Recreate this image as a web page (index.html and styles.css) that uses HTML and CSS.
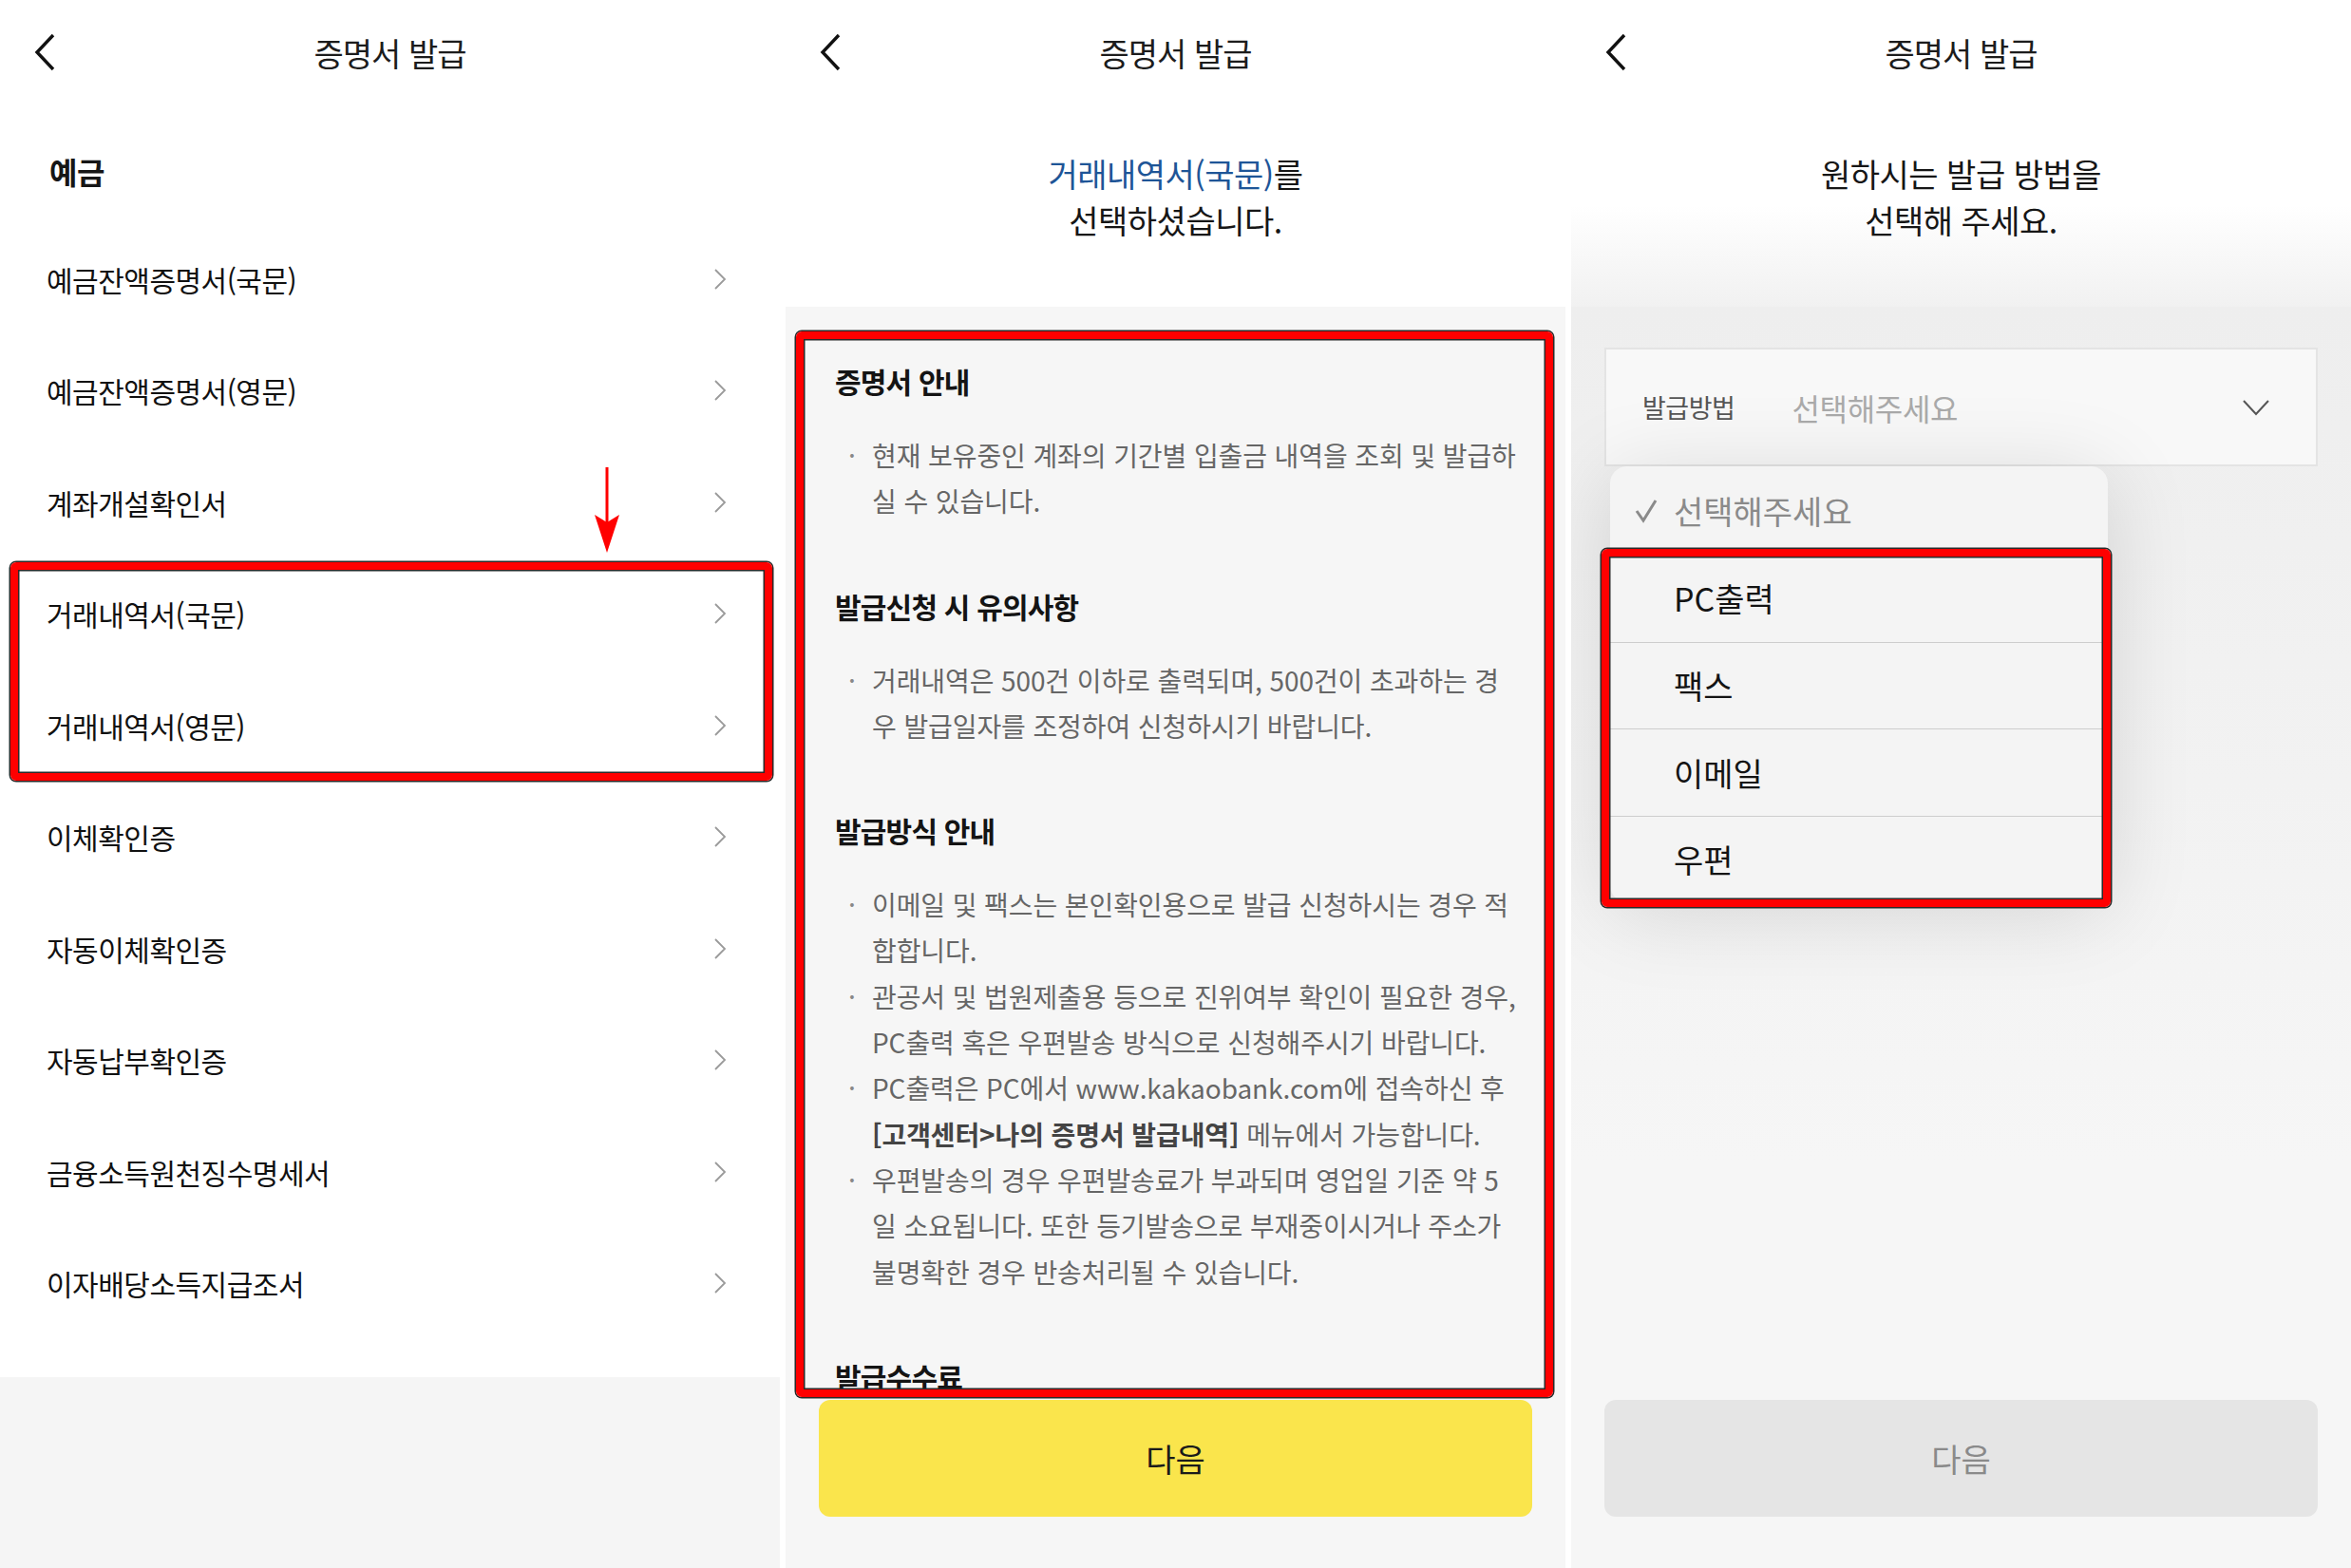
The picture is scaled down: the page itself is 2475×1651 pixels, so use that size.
FILE: index.html
```html
<!DOCTYPE html>
<html lang="ko">
<head>
  <meta charset="UTF-8">
  <title>증명서 발급</title>
  <link rel="stylesheet" href="styles.css">
</head>
<body>

<div class="screens">

  <!-- 1. 증명서 목록 -->
  <section class="screen">
    <header class="topbar">
      <svg class="back" width="24" height="40" viewBox="0 0 24 40"><path d="M21 2 L4 20 L21 38" /></svg>
      <h1>증명서 발급</h1>
    </header>

    <div class="group-title">예금</div>
    <ul class="doc-list">
      <li>예금잔액증명서(국문)<svg class="go" width="14" height="24" viewBox="0 0 14 24"><path d="M2 2 L12 12 L2 22" /></svg></li>
      <li>예금잔액증명서(영문)<svg class="go" width="14" height="24" viewBox="0 0 14 24"><path d="M2 2 L12 12 L2 22" /></svg></li>
      <li>계좌개설확인서<svg class="go" width="14" height="24" viewBox="0 0 14 24"><path d="M2 2 L12 12 L2 22" /></svg></li>
      <li>거래내역서(국문)<svg class="go" width="14" height="24" viewBox="0 0 14 24"><path d="M2 2 L12 12 L2 22" /></svg></li>
      <li>거래내역서(영문)<svg class="go" width="14" height="24" viewBox="0 0 14 24"><path d="M2 2 L12 12 L2 22" /></svg></li>
      <li>이체확인증<svg class="go" width="14" height="24" viewBox="0 0 14 24"><path d="M2 2 L12 12 L2 22" /></svg></li>
      <li>자동이체확인증<svg class="go" width="14" height="24" viewBox="0 0 14 24"><path d="M2 2 L12 12 L2 22" /></svg></li>
      <li>자동납부확인증<svg class="go" width="14" height="24" viewBox="0 0 14 24"><path d="M2 2 L12 12 L2 22" /></svg></li>
      <li>금융소득원천징수명세서<svg class="go" width="14" height="24" viewBox="0 0 14 24"><path d="M2 2 L12 12 L2 22" /></svg></li>
      <li>이자배당소득지급조서<svg class="go" width="14" height="24" viewBox="0 0 14 24"><path d="M2 2 L12 12 L2 22" /></svg></li>
    </ul>
    <div class="list-foot"></div>

    <div class="mark mark-list"></div>
    <svg class="pointer" width="28" height="90" viewBox="0 0 28 90">
      <rect x="12.5" y="0" width="3" height="60" />
      <path d="M1 50 L14 58 L27 50 L14 90 Z" />
    </svg>
  </section>

  <!-- 2. 증명서 안내 -->
  <section class="screen">
    <header class="topbar">
      <svg class="back" width="24" height="40" viewBox="0 0 24 40"><path d="M21 2 L4 20 L21 38" /></svg>
      <h1>증명서 발급</h1>
    </header>

    <p class="lead"><span class="picked">거래내역서(국문)</span>를<br>선택하셨습니다.</p>

    <div class="sheet">
      <div class="guide">
        <h2>증명서 안내</h2>
        <ul class="notes">
          <li>현재 보유중인 계좌의 기간별 입출금 내역을 조회 및 발급하실 수 있습니다.</li>
        </ul>

        <h2>발급신청 시 유의사항</h2>
        <ul class="notes">
          <li>거래내역은 500건 이하로 출력되며, 500건이 초과하는 경우 발급일자를 조정하여 신청하시기 바랍니다.</li>
        </ul>

        <h2>발급방식 안내</h2>
        <ul class="notes">
          <li>이메일 및 팩스는 본인확인용으로 발급 신청하시는 경우 적합합니다.</li>
          <li>관공서 및 법원제출용 등으로 진위여부 확인이 필요한 경우, PC출력 혹은 우편발송 방식으로 신청해주시기 바랍니다.</li>
          <li>PC출력은 PC에서 www.kakaobank.com에 접속하신 후 <b>[고객센터&gt;나의 증명서 발급내역]</b> 메뉴에서 가능합니다.</li>
          <li>우편발송의 경우 우편발송료가 부과되며 영업일 기준 약 5일 소요됩니다. 또한 등기발송으로 부재중이시거나 주소가 불명확한 경우 반송처리될 수 있습니다.</li>
        </ul>

        <h2>발급수수료</h2>
      </div>
      <div class="actions">
        <button class="btn-next">다음</button>
      </div>
    </div>

    <div class="mark mark-guide"></div>
  </section>

  <!-- 3. 발급방법 선택 -->
  <section class="screen">
    <header class="topbar">
      <svg class="back" width="24" height="40" viewBox="0 0 24 40"><path d="M21 2 L4 20 L21 38" /></svg>
      <h1>증명서 발급</h1>
    </header>

    <p class="lead lead-fade">원하시는 발급 방법을<br>선택해 주세요.</p>

    <div class="sheet sheet-select">
      <div class="select-box">
        <span class="select-label">발급방법</span>
        <span class="select-value">선택해주세요</span>
        <svg class="caret" width="30" height="18" viewBox="0 0 30 18"><path d="M2 2 L15 16 L28 2" /></svg>
      </div>

      <ul class="dropdown">
        <li class="checked">
          <svg class="check" width="24" height="26" viewBox="0 0 24 26"><path d="M2 13 L9 23 L22 2" /></svg>
          선택해주세요
        </li>
        <li>PC출력</li>
        <li>팩스</li>
        <li>이메일</li>
        <li>우편</li>
      </ul>

      <div class="actions">
        <button class="btn-next" disabled>다음</button>
      </div>
    </div>

    <div class="mark mark-menu"></div>
  </section>

</div>

</body>
</html>
```

FILE: styles.css
```css
* {
  box-sizing: border-box;
}

body {
  margin: 0;
  background: #fff;
  font-family: "Noto Sans CJK KR", "Noto Sans", sans-serif;
  color: #161616;
}

.screens {
  display: flex;
  gap: 6px;
  width: 2475px;
  height: 1651px;
}

.screen {
  position: relative;
  display: flex;
  flex-direction: column;
  width: 821px;
  height: 1651px;
  overflow: hidden;
  background: #fff;
}

/* top bar */
.topbar {
  display: grid;
  grid-template-columns: 90px 1fr 90px;
  align-items: center;
  height: 110px;
  flex-shrink: 0;
}

.back {
  display: block;
  margin-left: 35px;
}

.back path {
  fill: none;
  stroke: #111;
  stroke-width: 3.4;
}

.topbar h1 {
  margin: 0;
  text-align: center;
  font-size: 34px;
  font-weight: 400;
  letter-spacing: -1px;
  color: #1c1c1c;
}

/* screen 1 */
.group-title {
  padding: 50px 52px 35px;
  font-size: 32px;
  line-height: 40px;
  font-weight: 700;
  letter-spacing: -0.5px;
}

.doc-list {
  list-style: none;
  margin: 0;
  padding: 0 56px 40px 49px;
}

.doc-list li {
  display: flex;
  align-items: center;
  justify-content: space-between;
  height: 117.5px;
  font-size: 30px;
  letter-spacing: -0.5px;
  color: #111;
}

.go path {
  fill: none;
  stroke: #9a9a9a;
  stroke-width: 1.8;
}

.list-foot {
  flex: 1;
  background: #f5f5f5;
}

/* red annotation frames */
.mark {
  position: absolute;
  border: 8px solid #ff0000;
  border-radius: 6px;
  box-shadow: 0 0 0 1.5px #2a2a2a, inset 0 0 0 1.5px #2a2a2a;
  pointer-events: none;
}

.mark-list {
  left: 11px;
  top: 592px;
  width: 802px;
  height: 230px;
}

.mark-guide {
  left: 11px;
  top: 349px;
  width: 797px;
  height: 1122px;
}

.mark-menu {
  left: 32px;
  top: 578px;
  width: 536px;
  height: 377px;
}

.pointer {
  position: absolute;
  left: 625px;
  top: 492px;
  fill: #ff0000;
}

/* screens 2 and 3 */
.lead {
  margin: 0;
  padding: 48px 20px 67px;
  text-align: center;
  font-size: 34px;
  line-height: 49px;
  letter-spacing: -0.5px;
  color: #161616;
  flex-shrink: 0;
}

.picked {
  color: #1e5597;
}

.sheet {
  flex: 1;
  display: flex;
  flex-direction: column;
  background: #f6f6f6;
  min-height: 0;
}

.guide {
  flex: 1;
  min-height: 0;
  overflow: hidden;
  padding: 56px 52px 0 52px;
}

.guide h2 {
  margin: 0 0 32px;
  font-size: 30px;
  line-height: 44px;
  font-weight: 700;
  letter-spacing: -0.8px;
  color: #141414;
}

.notes {
  list-style: none;
  margin: 0 0 64px;
  padding: 0 0 0 39px;
}

.notes li {
  position: relative;
  font-size: 28px;
  line-height: 48.3px;
  letter-spacing: -0.1px;
  color: #666;
}

.notes li::before {
  content: "·";
  position: absolute;
  left: -25px;
  top: 0;
  color: #888;
}

.notes b {
  color: #444;
  white-space: nowrap;
}

.actions {
  padding: 12px 35px 54px;
  flex-shrink: 0;
}

.btn-next {
  display: block;
  width: 100%;
  height: 123px;
  border: none;
  border-radius: 12px;
  background: #fae54c;
  font-family: inherit;
  font-size: 34px;
  color: #1a1a1a;
}

.btn-next:disabled {
  background: #e5e5e5;
  color: #8a8a8a;
}

/* screen 3 */
.lead-fade {
  background: linear-gradient(to bottom, #fff 50%, #f1f1f1 100%);
}

.sheet-select {
  position: relative;
  padding-top: 43px;
  background: linear-gradient(to bottom, #eeeeee 0, #f2f2f2 500px, #f6f6f6 900px);
}

.select-box {
  display: flex;
  align-items: center;
  height: 125px;
  margin: 0 35px;
  padding: 0 48px 0 38px;
  border: 2px solid #e4e4e4;
  background: #f8f8f8;
}

.select-label {
  font-size: 27px;
  color: #555;
  letter-spacing: -0.5px;
}

.select-value {
  margin-left: 60px;
  font-size: 32px;
  color: #aaa;
  letter-spacing: -0.3px;
}

.caret {
  margin-left: auto;
}

.caret path {
  fill: none;
  stroke: #555;
  stroke-width: 2;
}

.dropdown {
  position: absolute;
  left: 41px;
  top: 168px;
  width: 524px;
  margin: 0;
  padding: 0;
  list-style: none;
  background: #f4f4f4;
  border-radius: 18px;
  box-shadow: 0 10px 90px rgba(0, 0, 0, 0.13);
}

.dropdown li {
  display: flex;
  align-items: center;
  height: 91.5px;
  padding-left: 67px;
  font-size: 34px;
  color: #141414;
  border-top: 1.5px solid #cdcdcd;
}

.dropdown li:nth-child(2) {
  border-top: none;
}

.dropdown li.checked {
  height: 93px;
  padding-left: 26px;
  gap: 17px;
  color: #8a8a8a;
  border-top: none;
}

.check path {
  fill: none;
  stroke: #8a8a8a;
  stroke-width: 3;
}

.sheet-select .actions {
  margin-top: auto;
  padding-top: 0;
}
```
